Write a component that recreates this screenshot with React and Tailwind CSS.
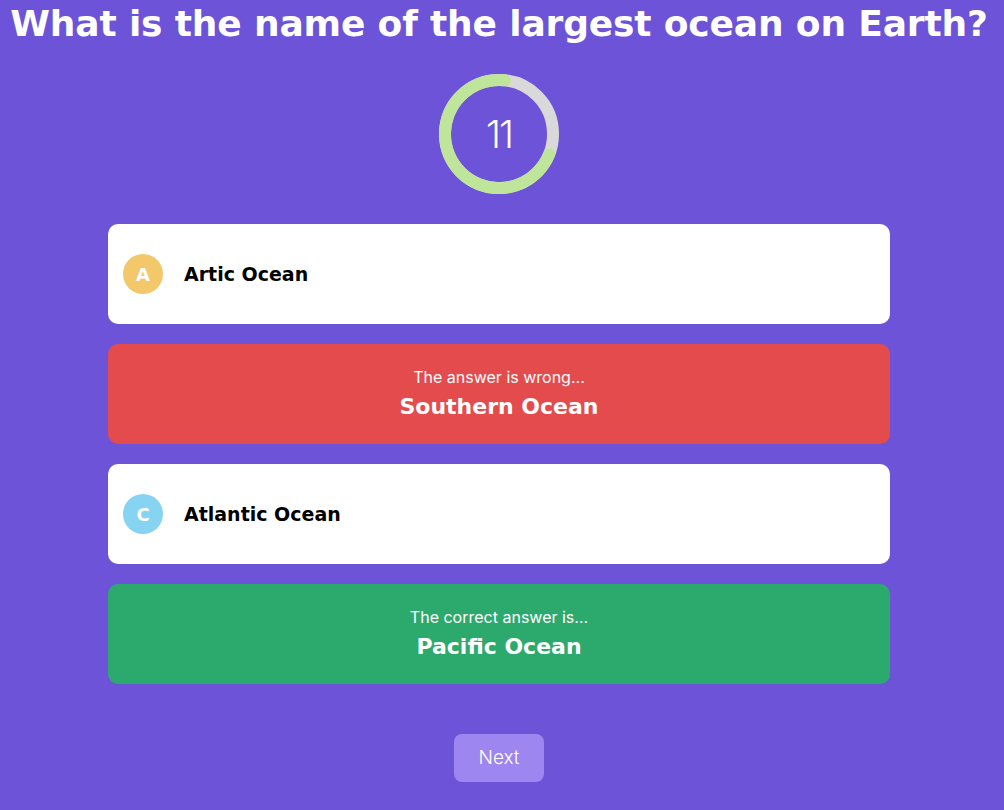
import React from 'react';

const answers = [
  { letter: 'A', text: 'Artic Ocean', badge: 'bg-[#f2c86b]' },
  { state: 'wrong', label: 'The answer is wrong...', text: 'Southern Ocean' },
  { letter: 'C', text: 'Atlantic Ocean', badge: 'bg-[#86d4f2]' },
  { state: 'correct', label: 'The correct answer is...', text: 'Pacific Ocean' },
];

const Timer = ({ value, total }) => {
  const r = 54;
  const c = 2 * Math.PI * r;
  const frac = value / total;
  return (
    <div className="relative w-[120px] h-[120px]">
      <svg width="120" height="120" viewBox="0 0 120 120">
        <circle cx="60" cy="60" r={r} fill="none" stroke="#d9d9d9" strokeWidth="12" />
        <circle
          cx="60"
          cy="60"
          r={r}
          fill="none"
          stroke="#bfe59b"
          strokeWidth="12"
          strokeLinecap="round"
          strokeDasharray={`${c * frac} ${c}`}
          transform="rotate(22 60 60)"
        />
      </svg>
      <div className="absolute inset-0 flex items-center justify-center text-white text-[38px] font-light font-['Inter',sans-serif] tracking-[-2px]">
        {value}
      </div>
    </div>
  );
};

export default function App() {
  return (
    <div className="min-h-[810px] w-full bg-[#6c53d7] flex flex-col items-center pr-[6px] font-['DejaVu_Sans',sans-serif]">
      <h1 className="text-white font-bold text-[36px] leading-[48px] whitespace-nowrap tracking-[-0.15px]">
        What is the name of the largest ocean on Earth?
      </h1>

      <div className="mt-[26px]">
        <Timer value={11} total={15.6} />
      </div>

      <div className="mt-[30px] w-[782px] flex flex-col gap-[20px]">
        {answers.map((a, i) =>
          a.state ? (
            <div
              key={i}
              className={`h-[100px] rounded-[10px] flex flex-col items-center justify-center text-white ${
                a.state === 'wrong' ? 'bg-[#e44b4d]' : 'bg-[#2caa6e]'
              }`}
            >
              <p className="text-[16px] leading-[20px] mt-[6px] font-['Inter',sans-serif]">{a.label}</p>
              <p className="text-[22px] leading-[40px] font-bold">{a.text}</p>
            </div>
          ) : (
            <div key={i} className="h-[100px] rounded-[10px] bg-white flex items-center pl-[15px]">
              <div className={`w-[40px] h-[40px] rounded-full ${a.badge} flex items-center justify-center text-white font-bold text-[18px]`}>
                {a.letter}
              </div>
              <span className="ml-[21px] text-black font-bold text-[19px]">{a.text}</span>
            </div>
          )
        )}
      </div>

      <button className="mt-[50px] w-[90px] h-[48px] rounded-[8px] bg-[#9d86ef] text-white text-[19px] font-light font-['Inter',sans-serif]">
        Next
      </button>
    </div>
  );
}
